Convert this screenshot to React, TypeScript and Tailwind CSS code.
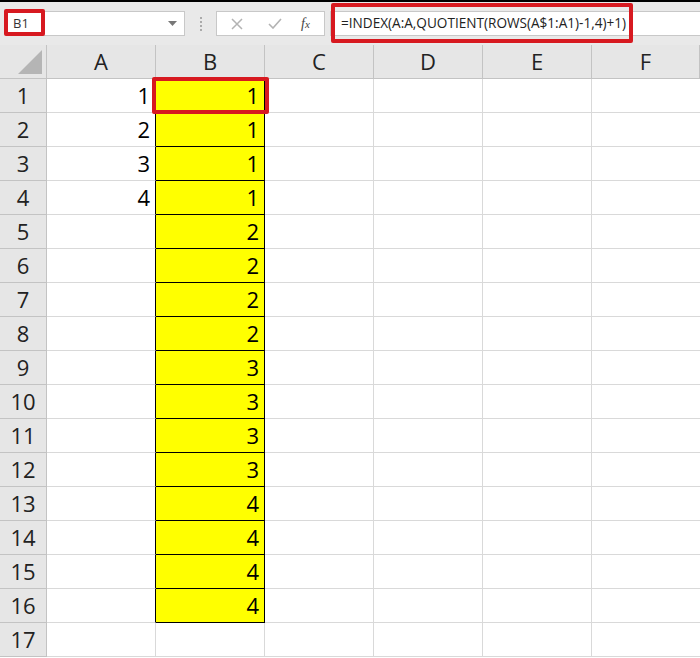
import React from "react";

const colsW = [47, 109, 109, 109, 109, 109, 108];
const letters = ["A", "B", "C", "D", "E", "F"];
const aVals: Record<number, string> = { 1: "1", 2: "2", 3: "3", 4: "4" };
const bVal = (r: number) => String(Math.floor((r - 1) / 4) + 1);

export default function App() {
  const rows = Array.from({ length: 17 }, (_, i) => i + 1);
  return (
    <div className="w-[700px] h-[658px] overflow-hidden bg-white" style={{ fontFamily: '"Open Sans", "Liberation Sans", sans-serif' }}>
      <div className="h-[2px] bg-black" />
      {/* toolbar */}
      <div className="relative h-[43px] bg-[#e9e9e9] flex items-center">
        <div className="ml-[6px] w-[179px] h-[25px] bg-white border border-[#c8c8c8] flex items-center justify-between pl-[6px] pr-[7px]">
          <span className="text-[13px] text-[#333]">B1</span>
          <svg width="9" height="5" viewBox="0 0 9 5"><path d="M0 0h9L4.5 5z" fill="#777" /></svg>
        </div>
        <div className="w-[31px] flex flex-col items-center gap-[2px]">
          <div className="w-[2px] h-[2px] bg-[#aaa]" />
          <div className="w-[2px] h-[2px] bg-[#aaa]" />
          <div className="w-[2px] h-[2px] bg-[#aaa]" />
          <div className="w-[2px] h-[2px] bg-[#aaa]" />
        </div>
        <div className="w-[109px] h-[25px] bg-white border border-[#c8c8c8] flex items-center">
          <svg className="ml-[14px]" width="12" height="12" viewBox="0 0 12 12"><path d="M1 1l10 10M11 1L1 11" stroke="#b3b3b3" strokeWidth="1.5" /></svg>
          <svg className="ml-[25px]" width="14" height="11" viewBox="0 0 14 11"><path d="M1 6l4 4 8-9" stroke="#b3b3b3" strokeWidth="1.6" fill="none" /></svg>
          <span className="ml-[19px] text-[14px] italic text-[#444]" style={{ fontFamily: '"Liberation Serif", serif' }}>f<span className="text-[11px]">x</span></span>
        </div>
        <div className="ml-[5px] flex-1 h-[25px] bg-white border border-[#c8c8c8] border-r-0 flex items-center pl-[10px]">
          <span className="text-[13.6px] text-[#222]">=INDEX(A:A,QUOTIENT(ROWS(A$1:A1)-1,4)+1)</span>
        </div>
        {/* annotations */}
        <div className="absolute left-[4px] top-[7px] w-[41px] h-[27px] border-[4px] border-[#d71920] rounded-[2px]" />
        <div className="absolute left-[331px] top-[1px] w-[302px] h-[40px] border-[4px] border-[#d71920] rounded-[2px]" />
      </div>
      {/* grid */}
      <div className="relative grid" style={{ gridTemplateColumns: colsW.map((w) => w + "px").join(" "), gridTemplateRows: "34px repeat(17, 34px)" }}>
        <div className="bg-[#e6e6e6] border-r border-b border-[#c3c3c3] relative">
          <svg className="absolute right-[4px] bottom-[4px]" width="24" height="24" viewBox="0 0 24 24"><path d="M24 0V24H0z" fill="#b5b5b5" /></svg>
        </div>
        {letters.map((l) => (
          <div key={l} className="bg-[#e6e6e6] border-r border-b border-[#c3c3c3] flex items-center justify-center text-[22px] text-[#222]">
            {l}
          </div>
        ))}
        {rows.map((r) => (
          <React.Fragment key={r}>
            <div className="bg-[#e6e6e6] border-r border-b border-[#c3c3c3] flex items-center justify-center text-[22px] text-[#222]">
              {r}
            </div>
            <div className={`border-b border-[#d9d9d9] border-r ${r <= 16 ? "border-r-black" : ""} flex items-center justify-end pr-[5px] text-[22px] text-black`}>
              {r <= 4 ? aVals[r] : ""}
            </div>
            {r <= 16 ? (
              <div className="bg-[#ffff00] border-r border-b border-black flex items-center justify-end pr-[5px] text-[22px] text-black">
                {bVal(r)}
              </div>
            ) : (
              <div className="border-r border-b border-[#d9d9d9]" />
            )}
            <div className="border-r border-b border-[#d9d9d9]" />
            <div className="border-r border-b border-[#d9d9d9]" />
            <div className="border-r border-b border-[#d9d9d9]" />
            <div className="border-b border-[#d9d9d9]" />
          </React.Fragment>
        ))}
        <div className="absolute left-[152px] top-[32px] w-[117px] h-[37px] border-[4px] border-[#d71920] rounded-[2px]" />
      </div>
    </div>
  );
}
